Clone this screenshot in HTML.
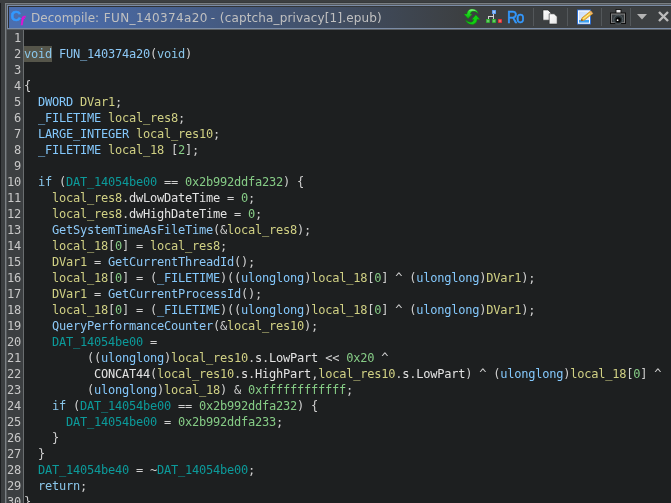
<!DOCTYPE html>
<html><head><meta charset="utf-8">
<style>
html,body{margin:0;padding:0;background:#3c3f41;overflow:hidden}
body{width:671px;height:503px;position:relative;font-family:"DejaVu Sans","Liberation Sans",sans-serif}
#edgeL{position:absolute;left:0;top:3px;width:1px;height:500px;background:#1b1d1f}
#topdark{position:absolute;left:5px;top:2px;width:700px;height:1px;background:#36393b}
#frame{position:absolute;left:5px;top:3px;width:700px;height:520px;border:1px solid #7a7f83;box-sizing:border-box}
#frameb{position:absolute;left:6px;top:4px;width:700px;height:520px;border:1px solid #55595c;box-sizing:border-box}
#frame2{position:absolute;left:7px;top:5px;width:700px;height:24px;border:1px solid #7b8ca6;box-sizing:border-box}
#title{position:absolute;left:8px;top:6px;width:700px;height:22px;background:linear-gradient(to right,#2e3033 0px,#2e3033 60px,#36393b 455px,#36393b 100%)}
#titlegrad{position:absolute;left:9px;top:7px;width:662px;height:21px;background:linear-gradient(to right,#4b6eaf 0px,#4b6eaf 40px,#3c3f41 455px,#3c3f41 100%)}
#under{position:absolute;left:7px;top:29px;width:700px;height:1px;background:#585c60}
#ttext{position:absolute;left:31px;top:10px;font-size:12px;line-height:16px;color:#c0c0c0;white-space:pre;font-kerning:none}
#gutter{position:absolute;left:7px;top:30px;width:16px;height:480px;background:#3c3f41;border-right:1px solid #6a6e70}
#code{position:absolute;left:24px;top:30px;width:660px;height:480px;background:#1d1f20}
.ln,.cl{position:absolute;font-family:"DejaVu Sans Mono","Liberation Mono",monospace;font-size:12px;line-height:16px;height:16px;white-space:pre;letter-spacing:-0.224px}
.ln{left:7px;width:14px;text-align:right;color:#c8c8c8}
.cl{left:24px;color:#d0d0d0}
.k{color:#8ac6ea}.f{color:#8cc8f6}.t{color:#84c8fc}.v{color:#d0d084}.g{color:#0c9a9a}.c{color:#86cc86}.p{color:#d4d4d4}.m{color:#e2e2e2}
.hl{background:#55554a;display:inline-block;height:16px;vertical-align:top}
#lines,#ttext,#icons{will-change:transform}
#lines{position:absolute;left:0;top:0;width:671px;height:503px}
</style></head><body>
<div id="edgeL"></div>
<div id="topdark"></div>
<div id="frame"></div>
<div id="frameb"></div>
<div id="frame2"></div>
<div id="title"></div>
<div id="titlegrad"></div>
<div id="under"></div>
<div id="ttext"><span style="letter-spacing:0.02px">Decompile: </span><span style="margin-left:0.8px;letter-spacing:0.38px">FUN_140374a20</span><span style="letter-spacing:-0.94px"> -  </span><span style="letter-spacing:0.149px">(captcha_privacy[1].epub)</span></div>
<svg id="icons" width="671" height="30" viewBox="0 0 671 30" style="position:absolute;left:0;top:0">
<defs>
<linearGradient id="gA" x1="0" y1="9" x2="0" y2="19" gradientUnits="userSpaceOnUse"><stop offset="0" stop-color="#b8ffb0"/><stop offset="0.25" stop-color="#2be62b"/><stop offset="1" stop-color="#06b406"/></linearGradient>
<linearGradient id="gB" x1="0" y1="15" x2="0" y2="25" gradientUnits="userSpaceOnUse"><stop offset="0" stop-color="#7dff7d"/><stop offset="0.35" stop-color="#14e014"/><stop offset="1" stop-color="#05a805"/></linearGradient>
<radialGradient id="rBl" cx="0.5" cy="0.5" r="0.6"><stop offset="0" stop-color="#dfe4fb"/><stop offset="0.55" stop-color="#6ea8f4"/><stop offset="1" stop-color="#4a90ec"/></radialGradient>
<radialGradient id="rGr" cx="0.5" cy="0.5" r="0.6"><stop offset="0" stop-color="#9ade9a"/><stop offset="0.55" stop-color="#3cb43c"/><stop offset="1" stop-color="#259a25"/></radialGradient>
<radialGradient id="rRd" cx="0.5" cy="0.5" r="0.6"><stop offset="0" stop-color="#f49a9a"/><stop offset="0.55" stop-color="#e04040"/><stop offset="1" stop-color="#cc2424"/></radialGradient>
<linearGradient id="pg" x1="0" y1="0" x2="1" y2="1"><stop offset="0" stop-color="#c2d8f8"/><stop offset="1" stop-color="#eef4fd"/></linearGradient>
<linearGradient id="pap" x1="0" y1="0" x2="1" y2="1"><stop offset="0" stop-color="#ffffff"/><stop offset="1" stop-color="#e4e4e4"/></linearGradient>
</defs>
<!-- Cf icon -->
<text x="10.5" y="21" font-family="Liberation Sans, sans-serif" font-weight="bold" font-size="15.4" fill="#3399ff" stroke="#3399ff" stroke-width="0.5" textLength="10.6" lengthAdjust="spacingAndGlyphs">C</text>
<text x="21" y="22.6" font-family="Liberation Serif, serif" font-style="italic" font-weight="bold" font-size="10.6" fill="#e410d4" stroke="#e410d4" stroke-width="0.55">f</text>
<!-- refresh -->
<g id="arrU">
<path d="M464 14.1 L466.9 14.1 C466.9 10.8 469.8 9 472 9 C475.2 9 477.6 10.9 478.4 13.7 C476.6 11.9 474.6 11.3 473.1 11.3 C471.6 11.3 470.6 12.5 470.4 14.1 L472.3 14.1 L468.1 18.7 Z" fill="url(#gA)" stroke="#0e7e0e" stroke-width="0.5" stroke-linejoin="round"/>
</g>
<path transform="rotate(180 472 16.75)" d="M464 14.1 L466.9 14.1 C466.9 10.8 469.8 9 472 9 C475.2 9 477.6 10.9 478.4 13.7 C476.6 11.9 474.6 11.3 473.1 11.3 C471.6 11.3 470.6 12.5 470.4 14.1 L472.3 14.1 L468.1 18.7 Z" fill="#10d010" stroke="#0e7e0e" stroke-width="0.5" stroke-linejoin="round"/>
<!-- graph -->
<g fill="#d2d2d2"><rect x="493" y="14" width="1" height="5"/><rect x="488" y="16" width="6" height="1"/><rect x="488" y="16" width="1" height="3"/></g>
<rect x="492" y="10" width="4" height="4" fill="url(#rBl)"/>
<rect x="486" y="19" width="4" height="4" fill="url(#rGr)"/>
<rect x="492" y="19" width="4" height="4" fill="url(#rGr)"/>
<rect x="498" y="19" width="4" height="4" fill="url(#rRd)"/>
<!-- Ro -->
<text transform="translate(506.9 23) scale(0.86 1)" font-family="Liberation Sans, sans-serif" font-size="17" fill="#3399ff" stroke="#3399ff" stroke-width="0.6" letter-spacing="-1.3">Ro</text>
<!-- separators -->
<g fill="#53575a"><rect x="533" y="8" width="1" height="18"/><rect x="567" y="8" width="1" height="18"/><rect x="601" y="8" width="1" height="18"/><rect x="630" y="8" width="1" height="18"/></g>
<!-- copy -->
<path d="M543 10 H548 L551 13 V20.2 H543 Z" fill="url(#pap)" stroke="#26282a" stroke-width="0.6"/>
<path d="M549.2 13.8 H554.2 L557.2 16.8 V24 H549.2 Z" fill="url(#pap)" stroke="#26282a" stroke-width="0.6"/>
<!-- edit -->
<rect x="577.5" y="10" width="13" height="14" fill="url(#pg)" stroke="#2f6fd0"/>
<rect x="578.5" y="11" width="11" height="12" fill="none" stroke="#ffffff"/>
<rect x="579" y="20" width="10" height="2.6" fill="#3da0f0"/>
<path d="M581.1 20.7 L582.1 17.8 L590.7 11 L592.7 13.6 L584.05 20.3 Z" fill="#f4c83c" stroke="#cf8a2c" stroke-width="0.8" stroke-linejoin="round"/>
<path d="M583.2 18.9 L590.6 13.1" stroke="#fdf0a0" stroke-width="1" fill="none"/>
<path d="M589.6 11.9 L590.7 11 L592.7 13.6 L591.6 14.5 Z" fill="#f0c090" stroke="#cf8a2c" stroke-width="0.5"/>
<path d="M581.1 20.7 L581.7 18.9 L583.1 20.2 Z" fill="#5a3010"/>
<!-- camera -->
<rect x="616" y="9.5" width="5" height="4" fill="#ececec" stroke="#141414" stroke-width="0.9"/>
<rect x="610.5" y="13" width="15" height="10.5" fill="#808080" stroke="#101010" stroke-width="1"/>
<rect x="612" y="14.6" width="12" height="7.6" fill="#383d40"/>
<circle cx="618.2" cy="19.6" r="4.5" fill="#2c3437" stroke="#566064" stroke-width="0.9"/>
<circle cx="618.2" cy="19.9" r="2.6" fill="#040404"/>
<circle cx="617.6" cy="20.2" r="0.9" fill="#f4f4f4"/>
<!-- dropdown -->
<path d="M637 14 H647 L642 19.5 Z" fill="#b4b4b4"/>
<!-- close -->
<path d="M659 12 L668 21 M668 12 L659 21" stroke="#bcbcbc" stroke-width="2.4" fill="none"/>
</svg>
<div id="gutter"></div>
<div id="code"></div>
<div id="lines">
<div class="ln" style="top:30px">1</div><div class="cl" style="top:30px"></div>
<div class="ln" style="top:46px">2</div><div class="cl" style="top:46px"><span class="k hl">void</span> <span class="f">FUN_140374a20</span>(<span class="k">void</span>)</div>
<div class="ln" style="top:62px">3</div><div class="cl" style="top:62px"></div>
<div class="ln" style="top:78px">4</div><div class="cl" style="top:78px">{</div>
<div class="ln" style="top:94px">5</div><div class="cl" style="top:94px">  <span class="t">DWORD</span> <span class="v">DVar1</span>;</div>
<div class="ln" style="top:110px">6</div><div class="cl" style="top:110px">  <span class="t">_FILETIME</span> <span class="v">local_res8</span>;</div>
<div class="ln" style="top:126px">7</div><div class="cl" style="top:126px">  <span class="t">LARGE_INTEGER</span> <span class="v">local_res10</span>;</div>
<div class="ln" style="top:142px">8</div><div class="cl" style="top:142px">  <span class="t">_FILETIME</span> <span class="v">local_18</span> [<span class="c">2</span>];</div>
<div class="ln" style="top:158px">9</div><div class="cl" style="top:158px">  </div>
<div class="ln" style="top:174px">10</div><div class="cl" style="top:174px">  <span class="k">if</span> (<span class="g">DAT_14054be00</span> == <span class="c">0x2b992ddfa232</span>) {</div>
<div class="ln" style="top:190px">11</div><div class="cl" style="top:190px">    <span class="v">local_res8</span>.<span class="m">dwLowDateTime</span> = <span class="c">0</span>;</div>
<div class="ln" style="top:206px">12</div><div class="cl" style="top:206px">    <span class="v">local_res8</span>.<span class="m">dwHighDateTime</span> = <span class="c">0</span>;</div>
<div class="ln" style="top:222px">13</div><div class="cl" style="top:222px">    <span class="f">GetSystemTimeAsFileTime</span>(&amp;<span class="v">local_res8</span>);</div>
<div class="ln" style="top:238px">14</div><div class="cl" style="top:238px">    <span class="v">local_18</span>[<span class="c">0</span>] = <span class="v">local_res8</span>;</div>
<div class="ln" style="top:254px">15</div><div class="cl" style="top:254px">    <span class="v">DVar1</span> = <span class="f">GetCurrentThreadId</span>();</div>
<div class="ln" style="top:270px">16</div><div class="cl" style="top:270px">    <span class="v">local_18</span>[<span class="c">0</span>] = (<span class="t">_FILETIME</span>)((<span class="t">ulonglong</span>)<span class="v">local_18</span>[<span class="c">0</span>] ^ (<span class="t">ulonglong</span>)<span class="v">DVar1</span>);</div>
<div class="ln" style="top:286px">17</div><div class="cl" style="top:286px">    <span class="v">DVar1</span> = <span class="f">GetCurrentProcessId</span>();</div>
<div class="ln" style="top:302px">18</div><div class="cl" style="top:302px">    <span class="v">local_18</span>[<span class="c">0</span>] = (<span class="t">_FILETIME</span>)((<span class="t">ulonglong</span>)<span class="v">local_18</span>[<span class="c">0</span>] ^ (<span class="t">ulonglong</span>)<span class="v">DVar1</span>);</div>
<div class="ln" style="top:318px">19</div><div class="cl" style="top:318px">    <span class="f">QueryPerformanceCounter</span>(&amp;<span class="v">local_res10</span>);</div>
<div class="ln" style="top:334px">20</div><div class="cl" style="top:334px">    <span class="g">DAT_14054be00</span> =</div>
<div class="ln" style="top:350px">21</div><div class="cl" style="top:350px">         ((<span class="t">ulonglong</span>)<span class="v">local_res10</span>.<span class="m">s</span>.<span class="m">LowPart</span> &lt;&lt; <span class="c">0x20</span> ^</div>
<div class="ln" style="top:366px">22</div><div class="cl" style="top:366px">          <span class="m">CONCAT44</span>(<span class="v">local_res10</span>.<span class="m">s</span>.<span class="m">HighPart</span>,<span class="v">local_res10</span>.<span class="m">s</span>.<span class="m">LowPart</span>) ^ (<span class="t">ulonglong</span>)<span class="v">local_18</span>[<span class="c">0</span>] ^</div>
<div class="ln" style="top:382px">23</div><div class="cl" style="top:382px">         (<span class="t">ulonglong</span>)<span class="v">local_18</span>) &amp; <span class="c">0xffffffffffff</span>;</div>
<div class="ln" style="top:398px">24</div><div class="cl" style="top:398px">    <span class="k">if</span> (<span class="g">DAT_14054be00</span> == <span class="c">0x2b992ddfa232</span>) {</div>
<div class="ln" style="top:414px">25</div><div class="cl" style="top:414px">      <span class="g">DAT_14054be00</span> = <span class="c">0x2b992ddfa233</span>;</div>
<div class="ln" style="top:430px">26</div><div class="cl" style="top:430px">    }</div>
<div class="ln" style="top:446px">27</div><div class="cl" style="top:446px">  }</div>
<div class="ln" style="top:462px">28</div><div class="cl" style="top:462px">  <span class="g">DAT_14054be40</span> = ~<span class="g">DAT_14054be00</span>;</div>
<div class="ln" style="top:478px">29</div><div class="cl" style="top:478px">  <span class="k">return</span>;</div>
<div class="ln" style="top:494px">30</div><div class="cl" style="top:494px">}</div>
</div>
</body></html>
